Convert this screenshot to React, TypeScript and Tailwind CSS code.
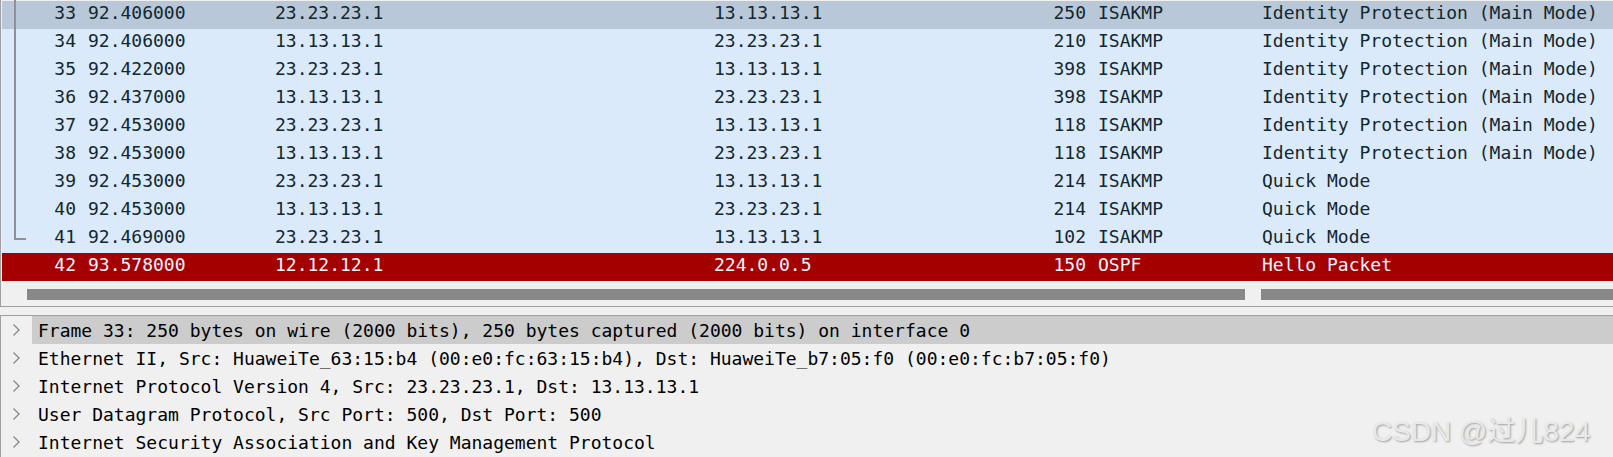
import React from 'react'

type Pkt = {
  no: number
  time: string
  src: string
  dst: string
  len: number
  proto: string
  info: string
}

const MAIN = 'Identity Protection (Main Mode)'

const packets: Pkt[] = [
  { no: 33, time: '92.406000', src: '23.23.23.1', dst: '13.13.13.1', len: 250, proto: 'ISAKMP', info: MAIN },
  { no: 34, time: '92.406000', src: '13.13.13.1', dst: '23.23.23.1', len: 210, proto: 'ISAKMP', info: MAIN },
  { no: 35, time: '92.422000', src: '23.23.23.1', dst: '13.13.13.1', len: 398, proto: 'ISAKMP', info: MAIN },
  { no: 36, time: '92.437000', src: '13.13.13.1', dst: '23.23.23.1', len: 398, proto: 'ISAKMP', info: MAIN },
  { no: 37, time: '92.453000', src: '23.23.23.1', dst: '13.13.13.1', len: 118, proto: 'ISAKMP', info: MAIN },
  { no: 38, time: '92.453000', src: '13.13.13.1', dst: '23.23.23.1', len: 118, proto: 'ISAKMP', info: MAIN },
  { no: 39, time: '92.453000', src: '23.23.23.1', dst: '13.13.13.1', len: 214, proto: 'ISAKMP', info: 'Quick Mode' },
  { no: 40, time: '92.453000', src: '13.13.13.1', dst: '23.23.23.1', len: 214, proto: 'ISAKMP', info: 'Quick Mode' },
  { no: 41, time: '92.469000', src: '23.23.23.1', dst: '13.13.13.1', len: 102, proto: 'ISAKMP', info: 'Quick Mode' },
  { no: 42, time: '93.578000', src: '12.12.12.1', dst: '224.0.0.5', len: 150, proto: 'OSPF', info: 'Hello Packet' },
]

const details = [
  'Frame 33: 250 bytes on wire (2000 bits), 250 bytes captured (2000 bits) on interface 0',
  'Ethernet II, Src: HuaweiTe_63:15:b4 (00:e0:fc:63:15:b4), Dst: HuaweiTe_b7:05:f0 (00:e0:fc:b7:05:f0)',
  'Internet Protocol Version 4, Src: 23.23.23.1, Dst: 13.13.13.1',
  'User Datagram Protocol, Src Port: 500, Dst Port: 500',
  'Internet Security Association and Key Management Protocol',
]

function rowColor(p: Pkt) {
  if (p.no === 33) return 'bg-[#b8c8d8] text-[#12272e]'
  if (p.proto === 'OSPF') return 'bg-[#a40000] text-[#f7f5ff]'
  return 'bg-[#daeafb] text-[#12272e]'
}

function Chevron() {
  return (
    <svg width="9" height="14" viewBox="0 0 9 14" className="shrink-0">
      <polyline points="1.5,1.5 7,7 1.5,12.5" fill="none" stroke="#8a8a8a" strokeWidth="1.4" />
    </svg>
  )
}

export default function App() {
  return (
    <div className="relative w-[1613px] h-[457px] overflow-hidden bg-[#f0f0f0] font-['DejaVu_Sans_Mono',monospace] text-[18px]">
      {/* Packet list */}
      <div className="h-[307px] border-l border-b border-[#a0a0a0] pl-px flex flex-col">
        <div className="relative pt-px">
          {packets.map((p) => (
            <div key={p.no} className={`flex h-[28px] leading-[24px] whitespace-pre ${rowColor(p)}`}>
              <div className="w-[74px] text-right">{p.no}</div>
              <div className="w-[199px] pl-[12px]">{p.time}</div>
              <div className="w-[439px]">{p.src}</div>
              <div className="w-[300px]">{p.dst}</div>
              <div className="w-[72px] text-right">{p.len}</div>
              <div className="w-[176px] pl-[12px]">{p.proto}</div>
              <div className="flex-1">{p.info}</div>
            </div>
          ))}
          {/* related packets line */}
          <div className="absolute left-[12px] top-0 h-[240px] w-[2px] bg-[#8e9296]" />
          <div className="absolute left-[12px] top-[238px] h-[2px] w-[12px] bg-[#8e9296]" />
        </div>
        <div className="flex gap-[16px] pt-[8px] pl-[25px]">
          <div className="h-[11px] w-[1218px] bg-[#888888]" />
          <div className="h-[11px] flex-1 bg-[#888888]" />
        </div>
      </div>

      {/* Packet details */}
      <div className="mt-[8px] h-[142px] border-l border-t border-[#a0a0a0]">
        {details.map((d, i) => (
          <div key={i} className="flex h-[28px] items-stretch">
            <div className="w-[31px] flex items-center justify-center">
              <Chevron />
            </div>
            <div className={`flex-1 pl-[6px] pt-px leading-[27px] whitespace-pre text-black ${i === 0 ? 'bg-[#cccccc]' : ''}`}>
              {d}
            </div>
          </div>
        ))}
      </div>

      {/* watermark */}
      <div className="absolute left-[1372px] top-[418px] text-[28px] leading-[28px] whitespace-pre font-['Liberation_Sans','Noto_Sans_CJK_SC',sans-serif] text-[#e9e9e9] [text-shadow:1px_1px_2px_rgba(0,0,0,0.35)]">
        CSDN @过儿824
      </div>
    </div>
  )
}
